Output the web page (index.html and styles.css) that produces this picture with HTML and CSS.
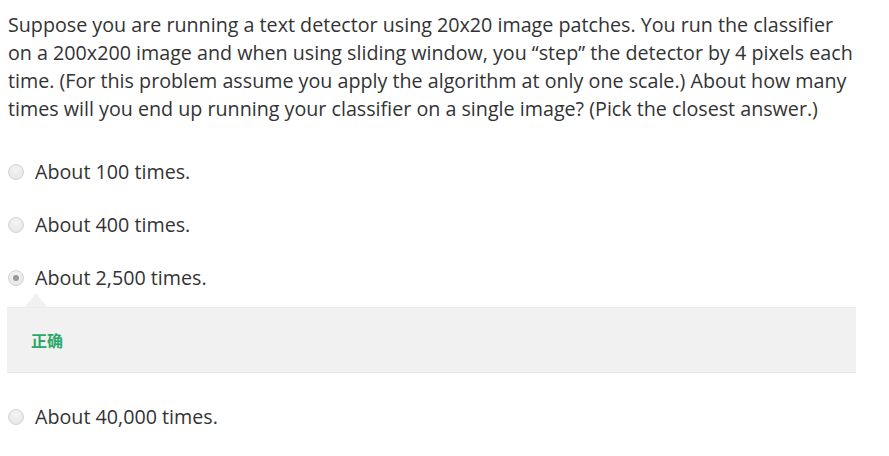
FILE: index.html
```html
<!DOCTYPE html>
<html>
<head>
<meta charset="utf-8">
<link rel="stylesheet" href="styles.css">
</head>
<body>
<div class="quiz">
  <p class="question">Suppose you are running a text detector using 20x20 image patches. You run the classifier on a 200x200 image and when using sliding window, you “step” the detector by 4 pixels each time. (For this problem assume you apply the algorithm at only one scale.) About how many times will you end up running your classifier on a single image? (Pick the closest answer.)</p>
  <div class="options">
    <label class="option"><span class="radio"></span><span class="label">About 100 times.</span></label>
    <label class="option"><span class="radio"></span><span class="label">About 400 times.</span></label>
    <div class="option-wrap">
      <label class="option"><span class="radio checked"></span><span class="label">About 2,500 times.</span></label>
      <div class="feedback"><span class="correct">正确</span></div>
    </div>
    <label class="option"><span class="radio"></span><span class="label">About 40,000 times.</span></label>
  </div>
</div>
</body>
</html>
```

FILE: styles.css
```css
html, body {
  margin: 0;
  padding: 0;
  background: #fff;
}
body {
  font-family: "Open Sans", "Noto Sans CJK SC", sans-serif;
  color: #333;
}
.quiz {
  padding: 0 33px 0 7px;
}
.question {
  margin: 0 -3px 0 0;
  padding: 11px 0 0 1px;
  font-size: 19.7px;
  line-height: 28px;
}
.options {
  display: flex;
  flex-direction: column;
  margin-top: 36px;
  gap: 27px;
}
.option {
  display: flex;
  align-items: center;
  height: 26px;
  font-size: 19.7px;
}
.radio {
  width: 14px;
  height: 14px;
  border-radius: 50%;
  border: 1px solid #d4d4d4;
  background: radial-gradient(circle at 50% 35%, #f4f4f4 0%, #e4e4e4 100%);
  margin: 0 11px 0 1px;
  position: relative;
  flex: none;
}
.radio.checked::after {
  content: "";
  position: absolute;
  left: 4px;
  top: 4px;
  width: 6px;
  height: 6px;
  border-radius: 50%;
  background: #999;
}
.label {
  line-height: 26px;
}
.option-wrap {
  display: flex;
  flex-direction: column;
}
.feedback {
  position: relative;
  margin-top: 16px;
  background: #f1f1f1;
  border-top: 1px solid #ececec;
  border-bottom: 1px solid #e8e8e8;
  height: 64px;
  display: flex;
  align-items: center;
  padding-left: 24px;
  margin-bottom: 4px;
}
.feedback::before {
  content: "";
  position: absolute;
  left: 18px;
  top: -15px;
  border-left: 11px solid transparent;
  border-right: 11px solid transparent;
  border-bottom: 14px solid #f1f1f1;
}
.correct {
  font-family: "Noto Sans CJK SC", sans-serif;
  font-weight: 700;
  font-size: 16px;
  color: #2aa86a;
}
```
